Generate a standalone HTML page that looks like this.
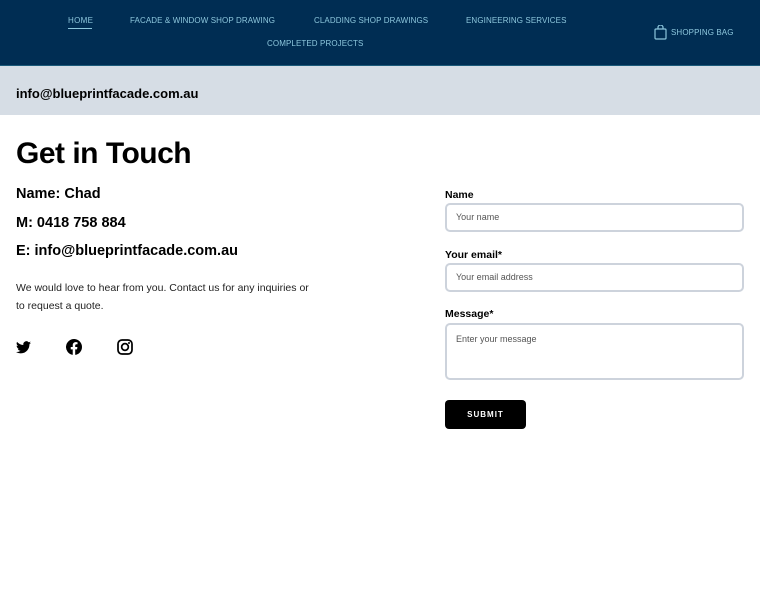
<!DOCTYPE html>
<html><head><meta charset="utf-8"><style>
*{box-sizing:border-box;margin:0;padding:0}
body{width:760px;height:600px;background:#fff;font-family:"Liberation Sans",sans-serif;color:#000;overflow:hidden;position:relative}
.hdr{position:absolute;left:0;top:0;width:760px;height:66px;background:#002d53;border-bottom:1px solid #1b5a7a}
.nav{position:absolute;font-size:8px;letter-spacing:0.3px;color:#8cc6dc;white-space:nowrap}
.bar{position:absolute;left:0;top:66px;width:760px;height:49px;background:#d6dde5}
.b{font-weight:bold;position:absolute;white-space:nowrap}
.lbl{position:absolute;left:445px;font-size:10.5px;font-weight:bold}
.inp{position:absolute;left:445px;width:299px;border:2px solid #cdd3dc;border-radius:5px;font-size:9px;color:#555;padding-left:9px}
</style></head><body>
<div class="hdr">
<div class="nav" style="left:68px;top:16px">HOME</div>
<div style="position:absolute;left:68px;top:28px;width:24px;height:1px;background:#8cc6dc"></div>
<div class="nav" style="left:130px;top:16px;letter-spacing:0.1px">FACADE &amp; WINDOW SHOP DRAWING</div>
<div class="nav" style="left:314px;top:16px;letter-spacing:0.1px">CLADDING SHOP DRAWINGS</div>
<div class="nav" style="left:466px;top:16px;letter-spacing:0.1px">ENGINEERING SERVICES</div>
<div class="nav" style="left:267px;top:39px;letter-spacing:0.1px">COMPLETED PROJECTS</div>
<svg style="position:absolute;left:654px;top:25px" width="13" height="15" viewBox="0 0 13 15"><rect x="1" y="4" width="11" height="10" rx="1" fill="none" stroke="#8cc6dc" stroke-width="1.2"/><path d="M4 4V2.5a2.5 2.5 0 0 1 5 0V4" fill="none" stroke="#8cc6dc" stroke-width="1.2"/></svg>
<div class="nav" style="left:671px;top:28px;letter-spacing:0.1px">SHOPPING BAG</div>
</div>
<div class="bar"><div class="b" style="left:16px;top:20px;font-size:13px">info@blueprintfacade.com.au</div></div>
<div class="b" style="left:16px;top:137px;font-size:30px;letter-spacing:-0.5px">Get in Touch</div>
<div class="b" style="left:16px;top:186px;font-size:14.5px">Name: Chad</div>
<div class="b" style="left:16px;top:215px;font-size:14.5px">M: 0418 758 884</div>
<div class="b" style="left:16px;top:243px;font-size:14.5px">E: info@blueprintfacade.com.au</div>
<div style="position:absolute;left:16px;top:280px;font-size:10.5px;line-height:17.5px;color:#222">We would love to hear from you. Contact us for any inquiries or<br>to request a quote.</div>
<svg style="position:absolute;left:16px;top:341px" width="15" height="13" viewBox="0 0 24 20"><path d="M24 2.4a9.8 9.8 0 0 1-2.8.8A4.9 4.9 0 0 0 23.3.4a9.900 9.9 0 0 1-3.1 1.2A4.9 4.9 0 0 0 11.8 6 14 14 0 0 1 1.7.9a4.9 4.9 0 0 0 1.5 6.6 4.9 4.9 0 0 1-2.2-.6 4.9 4.9 0 0 0 3.9 4.8 4.9 4.9 0 0 1-2.2.1 4.9 4.9 0 0 0 4.6 3.4A9.9 9.9 0 0 1 0 17.2 14 14 0 0 0 7.5 19.4c9.1 0 14-7.5 14-14v-.6A10 10 0 0 0 24 2.4z"/></svg>
<svg style="position:absolute;left:66px;top:339px" width="16" height="16" viewBox="0 0 24 24"><path d="M24 12a12 12 0 1 0-13.9 11.9v-8.4H7.1V12h3V9.4c0-3 1.8-4.7 4.5-4.7 1.3 0 2.7.2 2.7.2v2.9h-1.5c-1.5 0-2 .9-2 1.9V12h3.3l-.5 3.5h-2.8v8.4A12 12 0 0 0 24 12z"/></svg>
<svg style="position:absolute;left:117px;top:339px" width="16" height="16" viewBox="0 0 24 24"><rect x="1.5" y="1.5" width="21" height="21" rx="6" fill="none" stroke="#000" stroke-width="2.6"/><circle cx="12" cy="12" r="5" fill="none" stroke="#000" stroke-width="2.6"/><circle cx="18" cy="6" r="1.5"/></svg>
<div class="lbl" style="top:189px">Name</div>
<div class="inp" style="top:203px;height:29px;line-height:25px">Your name</div>
<div class="lbl" style="top:249px">Your email*</div>
<div class="inp" style="top:263px;height:29px;line-height:25px">Your email address</div>
<div class="lbl" style="top:308px">Message*</div>
<div class="inp" style="top:323px;height:57px;padding-top:9px">Enter your message</div>
<div style="position:absolute;left:445px;top:400px;width:81px;height:29px;background:#000;border-radius:4px;color:#fff;font-size:8px;font-weight:bold;letter-spacing:1px;text-align:center;line-height:29px">SUBMIT</div>
</body></html>
